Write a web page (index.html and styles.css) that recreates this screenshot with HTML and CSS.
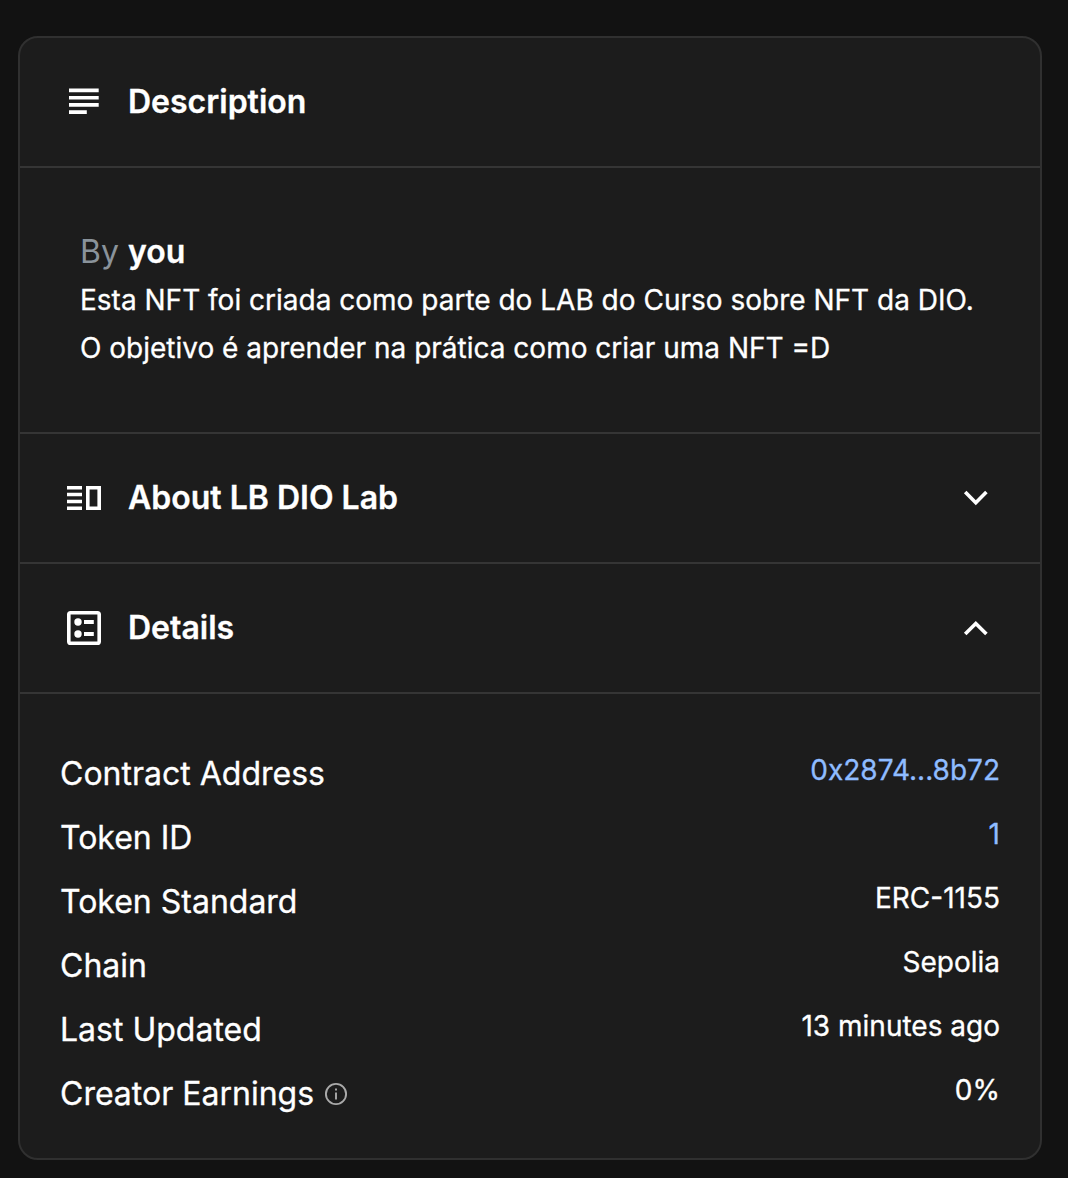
FILE: index.html
```html
<!DOCTYPE html>
<html lang="pt">
<head>
<meta charset="utf-8">
<title>NFT details</title>
<link rel="stylesheet" href="styles.css">
</head>
<body>
<main class="card">
  <header class="head">
    <svg class="icon" viewBox="0 0 48 48"><path d="M9 10.5h29.7v3.7H9zM9 17.9h29.7v3.7H9zM9 25.1h29.7v3.7H9zM9 32.2h17.8v3.7H9z"/></svg>
    <h2><span>Description</span></h2>
  </header>
  <section class="desc">
    <div class="by"><span class="by-label">By</span> <b>you</b></div>
    <p>Esta NFT foi criada como parte do LAB do Curso sobre NFT da DIO.<br><span>O objetivo é aprender na prática como criar uma NFT =D</span></p>
  </section>
  <header class="head">
    <svg class="icon" viewBox="0 0 48 48"><path d="M7 12h15v3.5H7zM7 18.8h15v3.5H7zM7 25.7h15v3.5H7zM7 32.5h15V36H7z"/><path class="line" d="M27.8 13.8h11.4v20.4H27.8z"/></svg>
    <h2><span>About LB DIO Lab</span></h2>
    <svg class="icon chev" viewBox="0 0 48 48"><path class="line" d="M13.2 18.1 23.8 28.7 34.4 18.1"/></svg>
  </header>
  <header class="head">
    <svg class="icon" viewBox="0 0 48 48"><rect class="line" x="8.8" y="8.8" width="30.4" height="30.4" rx="1.8"/><circle cx="18" cy="18" r="3.7"/><circle cx="18" cy="30" r="3.7"/><path d="M24 16.1h9.8v3.8H24zM24 28.1h9.8v3.8H24z"/></svg>
    <h2><span>Details</span></h2>
    <svg class="icon chev" viewBox="0 0 48 48"><path class="line" d="M13.2 30.1 23.8 19.5 34.4 30.1"/></svg>
  </header>
  <dl class="rows">
    <div class="row"><dt><span>Contract Address</span></dt><dd class="link"><span>0x2874...8b72</span></dd></div>
    <div class="row"><dt><span>Token ID</span></dt><dd class="link"><span>1</span></dd></div>
    <div class="row"><dt><span>Token Standard</span></dt><dd><span>ERC-1155</span></dd></div>
    <div class="row"><dt><span>Chain</span></dt><dd><span>Sepolia</span></dd></div>
    <div class="row"><dt><span>Last Updated</span></dt><dd><span>13 minutes ago</span></dd></div>
    <div class="row"><dt><span>Creator Earnings</span><svg class="info" viewBox="0 0 24 24"><circle cx="12" cy="12" r="10.1"/><path d="M12 10.4v7M12 6.4v2.2"/></svg></dt><dd><span>0%</span></dd></div>
  </dl>
</main>
</body>
</html>
```
FILE: styles.css
```css
* { box-sizing: border-box; }
body {
  margin: 0;
  padding: 36px 26px 18px 18px;
  min-height: 1178px;
  background: #121212;
  color: #fff;
  font-family: Inter, "Liberation Sans", sans-serif;
  -webkit-text-stroke: 0.3px currentColor;
}
.card {
  height: 1124px;
  border: 2px solid #303030;
  border-radius: 20px;
  background: #1c1c1c;
  overflow: hidden;
}
.head {
  display: flex;
  align-items: center;
  height: 130px;
  padding: 0 40px;
  border-bottom: 2px solid #353535;
}
.icon { width: 48px; height: 48px; fill: #fff; flex: none; }
.line { fill: none; stroke: #fff; stroke-width: 3.6; }
.chev { margin-left: auto; }
h2 { margin: 0 0 0 20px; font-size: 32px; line-height: 48px; font-weight: 600; white-space: nowrap; }
.desc { height: 266px; padding: 60px; border-bottom: 2px solid #353535; }
.by { font-size: 32px; line-height: 48px; }
.by-label { color: #8a939b; -webkit-text-stroke: 0; }
.by b { font-weight: 600; }
.desc p { margin: 0; font-size: 28px; line-height: 48px; white-space: nowrap; }
.rows { margin: 0; padding: 48px 40px 0; }
.row { display: flex; justify-content: space-between; height: 64px; }
dt { display: flex; align-items: center; height: 64px; font-size: 32px; line-height: 48px; }
dd { margin: 0; font-size: 28px; line-height: 56px; }
.link { color: #8fbcff; }
.info { width: 24px; height: 24px; margin-left: 10px; fill: none; stroke: #aaa; stroke-width: 1.9; }
```
